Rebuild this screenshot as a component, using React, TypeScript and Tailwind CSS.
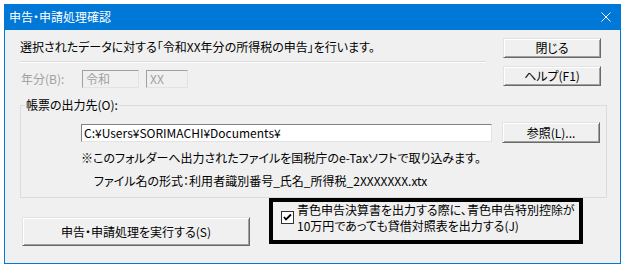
const btn =
  "flex items-center justify-center bg-[#f0f0f0] text-black text-[12px] border border-t-[#e3e3e3] border-l-[#e3e3e3] border-r-[#696969] border-b-[#696969] shadow-[inset_1px_1px_0_#ffffff,inset_-1px_-1px_0_#a0a0a0]"

const CloseIcon = () => (
  <svg width="10" height="10" viewBox="0 0 10 10">
    <path d="M0.5 0.5 L9.5 9.5 M9.5 0.5 L0.5 9.5" stroke="#ffffff" strokeWidth="1" fill="none" />
  </svg>
)

const CheckIcon = () => (
  <svg width="9" height="9" viewBox="0 0 9 9">
    <path d="M1 4 L3 6.5 L8 1.5" stroke="#000000" strokeWidth="1.8" fill="none" />
  </svg>
)

const App = () => {
  return (
    <div className="w-[624px] h-[272px] bg-white pl-[4px] pt-[4px] font-['Noto_Sans_CJK_JP',sans-serif] [font-feature-settings:'palt'] text-[12px] leading-[16px] text-black">
      <div className="w-[617px] h-[260px] flex flex-col">
        {/* title bar */}
        <div className="h-[26px] bg-[#0078d7] flex items-center justify-between pl-[5px] pr-[10px] text-white">
          <span>申告・申請処理確認</span>
          <CloseIcon />
        </div>

        {/* body */}
        <div className="flex-1 bg-[#f0f0f0] border-x border-b border-[#0078d7] flex flex-col">
          <div className="flex pt-[8px] pl-[15px]">
            <div className="w-[466px] flex flex-col">
              <div className="mt-[1px] h-[16px]">選択されたデータに対する「令和XX年分の所得税の申告」を行います。</div>
              <div className="mt-[6px] h-[2px] border-t border-t-[#dcdcdc] border-b border-b-white" />
              <div className="mt-[7px] h-[18px] flex items-center text-[#a0a0a0]">
                <span className="ml-[1px] w-[61px]">年分(B):</span>
                <div className="w-[57px] h-[18px] flex items-center pl-[3px] border border-t-[#a0a0a0] border-l-[#a0a0a0] border-r-[#e3e3e3] border-b-[#e3e3e3]">令和</div>
                <div className="ml-[7px] w-[42px] h-[18px] flex items-center pl-[3px] border border-t-[#a0a0a0] border-l-[#a0a0a0] border-r-[#e3e3e3] border-b-[#e3e3e3]">XX</div>
              </div>
            </div>
            <div className="ml-[17px] flex flex-col gap-[8px]">
              <button className={`${btn} w-[98px] h-[20px]`}>閉じる</button>
              <button className={`${btn} w-[98px] h-[20px]`}>ヘルプ(F1)</button>
            </div>
          </div>

          <fieldset className="mt-[9px] ml-[15px] w-[587px] border border-[#dcdcdc] px-0 pb-[8px]">
            <legend className="ml-[4px] px-[1px]">帳票の出力先(O):</legend>
            <div className="mt-[9px] flex items-center">
              <div className="ml-[60px] w-[411px] h-[18px] bg-white flex items-center pl-[2px] border border-t-[#828282] border-l-[#828282] border-r-[#e3e3e3] border-b-[#e3e3e3]">
                C:¥Users¥SORIMACHI¥Documents¥
              </div>
              <button className={`${btn} ml-[10px] w-[98px] h-[21px]`}>参照(L)...</button>
            </div>
            <div className="mt-[7px] ml-[60px]">※このフォルダーへ出力されたファイルを国税庁のe-Taxソフトで取り込みます。</div>
            <div className="mt-[7px] ml-[73px]">ファイル名の形式：利用者識別番号_氏名_所得税_2XXXXXXX.xtx</div>
          </fieldset>

          <div className="flex items-start pl-[17px]">
            <button className={`${btn} mt-[19px] w-[228px] h-[29px]`}>申告・申請処理を実行する(S)</button>
            <div className="ml-[19px] w-[314px] h-[46px] border-[4px] border-black flex items-start pl-[8px]">
              <div className="mt-[9px] w-[13px] h-[13px] bg-white border border-[#333333] flex items-center justify-center">
                <CheckIcon />
              </div>
              <div className="ml-[3px] leading-[16px] whitespace-nowrap">
                青色申告決算書を出力する際に、青色申告特別控除が
                <br />
                10万円であっても貸借対照表を出力する(J)
              </div>
            </div>
          </div>
        </div>
      </div>
    </div>
  )
}

export default App
